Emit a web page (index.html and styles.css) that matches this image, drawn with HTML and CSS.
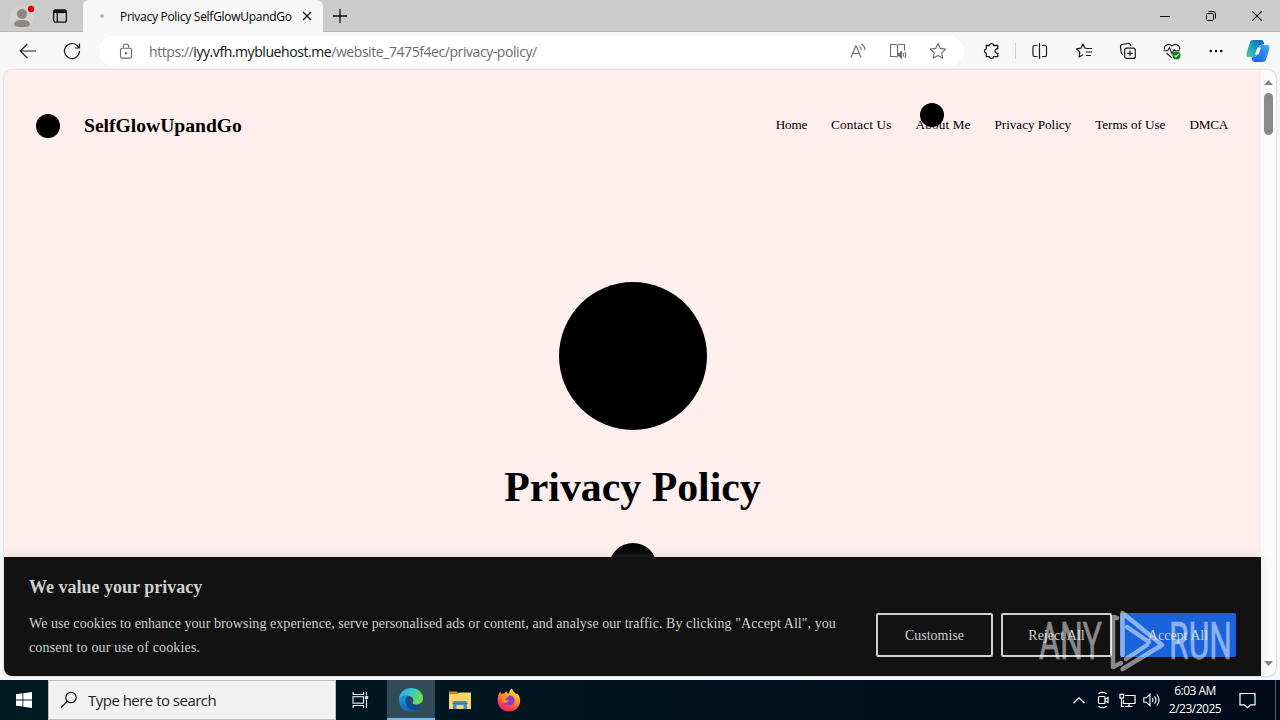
FILE: index.html
```html
<!DOCTYPE html>
<html lang="en">
<head>
    <meta charset="UTF-8">
    <meta name="viewport" content="width=device-width, initial-scale=1.0">
    <title>Privacy Policy SelfGlowUpandGo</title>
    <link rel="stylesheet" href="styles.css">
</head>
<body>
<div class="desktop">

    <!-- Tab strip -->
    <div class="tabstrip">
        <div class="profile">
            <svg width="28" height="28" viewBox="0 0 28 28"><circle cx="14" cy="14" r="12" fill="#d3d1d0"/><circle cx="14" cy="11" r="5" fill="#8b8785"/><path d="M6 22c0-4 3-5 8-5s8 1 8 5c-2 3-14 3-16 0z" fill="#8b8785"/><circle cx="23" cy="6" r="3.2" fill="#e3000f"/></svg>
        </div>
        <div class="workspaces">
            <svg width="16" height="16" viewBox="0 0 16 16" fill="none" stroke="#111" stroke-width="1.3"><rect x="1.6" y="1.8" width="12.8" height="12.4" rx="2.2"/><path d="M2 3.6h12" stroke-width="3"/><path d="M5.3 4v10"/></svg>
        </div>
        <div class="tab">
            <span class="tab-spinner"></span>
            <span class="tab-title">Privacy Policy SelfGlowUpandGo</span>
            <svg width="10" height="10" viewBox="0 0 10 10" stroke="#111" stroke-width="1.3"><path d="M1 1l8 8M9 1L1 9"/></svg>
        </div>
        <div class="new-tab">
            <svg width="14" height="14" viewBox="0 0 14 14" stroke="#111" stroke-width="1.3"><path d="M7 0v14M0 7h14"/></svg>
        </div>
        <div class="window-buttons">
            <span><svg width="10" height="10" viewBox="0 0 10 10" stroke="#111"><path d="M0 5.5h10"/></svg></span>
            <span><svg width="10" height="10" viewBox="0 0 10 10" fill="none" stroke="#111"><rect x=".5" y="2.5" width="7" height="7" rx="1.2"/><path d="M2.5 .5H7a2.5 2.5 0 0 1 2.5 2.5v4.5"/></svg></span>
            <span><svg width="10" height="10" viewBox="0 0 10 10" stroke="#111" stroke-width="1.1"><path d="M0 0l10 10M10 0L0 10"/></svg></span>
        </div>
    </div>

    <!-- Toolbar -->
    <div class="toolbar">
        <span class="tool"><svg width="18" height="16" viewBox="0 0 18 16" fill="none" stroke="#222" stroke-width="1.2"><path d="M17 8H1.5M8.3 1L1.3 8l7 7"/></svg></span>
        <span class="tool"><svg width="18" height="18" viewBox="0 0 18 18" fill="none" stroke="#222" stroke-width="1.2"><path d="M16.5 9A7.5 7.5 0 1 1 14.4 3.8L16.5 6M16.5 1.5V6H12"/></svg></span>
        <div class="address">
            <svg class="lock" width="14" height="16" viewBox="0 0 14 16" fill="none" stroke="#6b6b6b" stroke-width="1.1"><rect x="1.5" y="5.3" width="11" height="9.8" rx="1.5"/><path d="M4.3 5.3V3.7a2.7 2.7 0 0 1 5.4 0v1.6"/><circle cx="7" cy="10.3" r=".7" fill="#6b6b6b"/></svg>
            <span class="url">https://<b>iyy.vfh.mybluehost.me</b>/website_7475f4ec/privacy-policy/</span>
            <span class="address-icon"><svg width="18" height="16" viewBox="0 0 18 16" fill="none" stroke="#6b6b6b" stroke-width="1.1"><path d="M2 14.5L6.7 3h.6L12 14.5M3.6 10.5h6.8M10.3 3.6c1.4.9 2 2 2.1 3.7M12.3 1c2.5 1.3 3.7 3.4 3.8 6.3"/></svg></span>
            <span class="address-icon"><svg width="18" height="16" viewBox="0 0 18 16" fill="none" stroke="#6b6b6b" stroke-width="1.1"><path d="M8.5 2.7C8.2 1.8 7.5 1.5 6.5 1.5H1.5v12h5c1 0 1.7.3 2 1M8.5 2.7C8.8 1.8 9.5 1.5 10.5 1.5h5v6M8.5 2.7v10"/><path d="M9 10.5h1.5l2-2v6.5l-2-2H9z" fill="#6b6b6b"/><path d="M14 10c.8 1 .8 2.5 0 3.5M15.7 8.7c1.4 2 1.4 4.2 0 6.1"/></svg></span>
            <span class="address-icon"><svg width="18" height="18" viewBox="0 0 18 18" fill="none" stroke="#6b6b6b" stroke-width="1.1" stroke-linejoin="round"><path d="M9 1.5l2.3 4.9 5.3.7-3.9 3.7 1 5.4L9 13.6l-4.7 2.6 1-5.4L1.4 7.1l5.3-.7z"/></svg></span>
        </div>
        <span class="tool"><svg width="18" height="18" viewBox="0 0 18 18" fill="none" stroke="#1b1b1b" stroke-width="1.3" stroke-linejoin="round"><path d="M4.3 3.5h3a2.3 2.3 0 0 1 4.5 0h4v3.3a2.3 2.3 0 1 0 0 4.5v3.3h-4a2.3 2.3 0 0 1-4.5 0h-3v-3.3a2.3 2.3 0 0 1 0-4.5z"/></svg></span>
        <span class="tool-divider"></span>
        <span class="tool"><svg width="18" height="16" viewBox="0 0 18 16" fill="none" stroke="#1b1b1b" stroke-width="1.2"><path d="M6.5 2.5h-3A1.5 1.5 0 0 0 2 4v8a1.5 1.5 0 0 0 1.5 1.5h3M11 2.5h3A1.5 1.5 0 0 1 15.5 4v8a1.5 1.5 0 0 1-1.5 1.5h-3M8.5 0v16"/></svg></span>
        <span class="tool"><svg width="18" height="18" viewBox="0 0 18 18" fill="none" stroke="#1b1b1b" stroke-width="1.2" stroke-linejoin="round"><path d="M11 6.2L9.8 6 8 2 6 6.2l-4.5.6 3.3 3.2-.8 5 4-2.3M11 6.5h6M11 10h6M11 13.5h5"/></svg></span>
        <span class="tool"><svg width="18" height="18" viewBox="0 0 18 18" fill="none" stroke="#1b1b1b" stroke-width="1.2"><rect x="5.7" y="6.2" width="10.6" height="10.2" rx="2"/><path d="M11 8.5v5.6M8.2 11.3h5.6M3.8 12.8C2.5 12 2.2 11 2 9.5L1.5 4.8C1.4 3.5 2 2.7 3.3 2.5L9 1.5c1.4-.2 2.4.4 2.8 2.5"/></svg></span>
        <span class="tool"><svg width="20" height="18" viewBox="0 0 20 18" fill="none" stroke="#1b1b1b" stroke-width="1.1"><path d="M2.5 7.5C1.5 3.5 6.5.5 10 4c3.5-3.5 8.5-.5 7.5 3.5M1.5 8.7h4l2-3 2.5 6 2-4 1 1h5M4.5 11l5.5 5"/><circle cx="14.5" cy="13.5" r="4" fill="#15801b" stroke="none"/><path d="M12.7 13.5l1.3 1.3 2.5-2.6" stroke="#fff"/></svg></span>
        <span class="tool"><svg width="14" height="4" viewBox="0 0 14 4"><circle cx="1.7" cy="2" r="1.2"/><circle cx="7" cy="2" r="1.2"/><circle cx="12.3" cy="2" r="1.2"/></svg></span>
        <span class="tool copilot"><svg width="24" height="24" viewBox="0 0 24 24">
            <defs>
                <linearGradient id="cpA" x1="0" y1="1" x2="1" y2="0"><stop offset="0" stop-color="#59c6a0"/><stop offset=".5" stop-color="#169fc1"/><stop offset="1" stop-color="#1458b5"/></linearGradient>
                <linearGradient id="cpB" x1="0" y1="1" x2="1" y2="0"><stop offset="0" stop-color="#1668d8"/><stop offset=".6" stop-color="#2a84ec"/><stop offset="1" stop-color="#49b5ee"/></linearGradient>
            </defs>
            <path d="M7 1h8c2 0 2.5 1 3.2 4l-4.5 1.5-3.2 9C9.8 17.5 9 18 7.5 18H3C.5 18 0 16 .7 13.5L4 3.5C4.6 1.7 5.500 1 7 1z" fill="url(#cpA)"/>
            <path d="M17 23H9c-2 0-2.8-1-3.5-4.5l4.5-1 3.3-9.3C14 6.5 15 6 16.5 6H21c2.5 0 3 2 2.3 4.5L20 20.5c-.6 1.8-1.5 2.5-3 2.5z" fill="url(#cpB)"/>
            <path d="M11.5 8.5h3.5l-2.5 7H9z" fill="#f7f7f7"/>
        </svg></span>
    </div>

    <!-- Web page -->
    <div class="viewport">
        <div class="page">
            <div class="site-header">
                <span class="site-dot"></span>
                <span class="site-name">SelfGlowUpandGo</span>
                <div class="site-nav">
                    <a class="narrow">Home</a>
                    <a class="wide">Contact Us</a>
                    <a class="wide has-dot">About Me</a>
                    <a>Privacy Policy</a>
                    <a>Terms of Use</a>
                    <a class="narrow">DMCA</a>
                </div>
            </div>
            <div class="hero">
                <span class="hero-circle"></span>
                <h1>Privacy Policy</h1>
                <span class="hero-dot"></span>
            </div>

            <!-- Cookie banner -->
            <div class="cookie-bar">
                <p class="cookie-title">We value your privacy</p>
                <div class="cookie-body">
                    <p class="cookie-text">We use cookies to enhance your browsing experience, serve personalised ads or content, and analyse our traffic. By clicking "Accept All", you<br><span>consent to our use of cookies.</span></p>
                    <button class="btn btn-customise">Customise</button>
                    <button class="btn btn-reject">Reject All</button>
                    <button class="btn btn-accept">Accept All</button>
                </div>
            </div>
        </div>
        <div class="scrollbar">
            <svg width="9" height="5" viewBox="0 0 9 5"><path d="M0 5L4.5 0 9 5z" fill="#858585"/></svg>
            <span class="scroll-thumb"></span>
            <svg width="9" height="5" viewBox="0 0 9 5"><path d="M0 0h9L4.5 5z" fill="#858585"/></svg>
        </div>
    </div>

    <!-- Taskbar -->
    <div class="taskbar">
        <div class="start">
            <svg width="16" height="16" viewBox="0 0 16 16" fill="#fff"><path d="M0 2.2l6.5-.9v6.2H0zM7.3 1.2L16 0v7.5H7.3zM0 8.4h6.5v6.2L0 13.7zM7.3 8.4H16V16l-8.7-1.2z"/></svg>
        </div>
        <div class="search">
            <svg width="18" height="18" viewBox="0 0 18 18" fill="none" stroke="#222" stroke-width="1.3"><circle cx="11" cy="6.5" r="5.2"/><path d="M7.3 10.3L1 16.7"/></svg>
            <span>Type here to search</span>
        </div>
        <div class="task task-view"><svg width="17" height="16" viewBox="0 0 17 16" fill="none" stroke="#e8eef0" stroke-width="1.1"><path d="M1 0v2.5h10.5V0M1 16v-2.5h10.5V16M14.5 0v3.5M14.5 7.5V16"/><rect x="1" y="4.7" width="10.5" height="6.5"/><rect x="13.6" y="4.6" width="2" height="2" fill="#fff"/></svg></div>
        <div class="task task-active">
            <svg width="26" height="26" viewBox="0 0 26 26">
                <defs>
                    <linearGradient id="edA" x1="0" y1="0" x2="1" y2=".4"><stop offset="0" stop-color="#29a9e0"/><stop offset=".55" stop-color="#36c9c6"/><stop offset="1" stop-color="#72dc51"/></linearGradient>
                    <linearGradient id="edB" x1="0" y1="0" x2=".5" y2="1"><stop offset="0" stop-color="#1c9be0"/><stop offset="1" stop-color="#1163b8"/></linearGradient>
                </defs>
                <path d="M1 12C1.5 5.5 6.5 1 13 1c7 0 12 4.7 12 10.3 0 4-3 6.2-6.5 6.2-2.5 0-4.3-.9-3.8-2 1.5-2 .5-5.5-3-6.5C7.5 8 3 9 1 12z" fill="url(#edA)"/>
                <path d="M1 12.5C2.5 9 7 7.7 10.5 8.5c-2.3 1-3.5 3.5-3 6.5.7 4.5 5 8.5 11 7-1.5 2-4 3-6.5 3C5.5 24.5.5 19.5 1 12.5z" fill="url(#edB)"/>
                <path d="M8.5 12c-2 5.5 1.5 11 8 10.7 3-.2 5.5-2 7-4.2.3-.6-.2-.9-.7-.6-3 1.7-8 1.2-9.8-1.6C12 14.5 12.5 13 13.3 12.5c-1.3-2.3-3.8-2.2-4.8-.5z" fill="#0c4a9a"/>
            </svg>
        </div>
        <div class="task">
            <svg width="22" height="19" viewBox="0 0 22 19"><path d="M0 .5h8l1.5 1.8H0z" fill="#d98f1a"/><path d="M0 2.5h9l1.5-1H22V18H0z" fill="#f8d768"/><path d="M4 18v-6.5c0-1 .5-1.5 1.5-1.5h11c1 0 1.5.5 1.5 1.5V18h-3.5v-4h-7v4z" fill="#3e91cc"/><path d="M3.5 12.5h15" stroke="#2d7db8"/></svg>
        </div>
        <div class="task">
            <svg width="24" height="24" viewBox="0 0 24 24">
                <defs><linearGradient id="ff" x1=".8" y1="0" x2=".3" y2="1"><stop offset="0" stop-color="#fff04a"/><stop offset=".4" stop-color="#ff9a1f"/><stop offset=".75" stop-color="#ff4047"/><stop offset="1" stop-color="#e81e78"/></linearGradient></defs>
                <path d="M3.5 3.5c0 1 .5 2 1.2 2.5 1-.6 2-.8 3-.7C8 4.3 8.7 3.5 9.5 3c0 1.5 1 2.3 2.5 2.5C12.2 3 13.3 1.3 15 .5c.5 2.5 2.5 3.5 4.3 5.5.7.3.8-.4.8-.8 2.3 2.5 3.2 5.3 3 8.3C22.7 19.3 18 23.5 12 23.5S1 19 .7 13C.5 9 1.5 5.5 3.5 3.5z" fill="url(#ff)"/>
                <path d="M12 7.5c3.5-.5 5.8 2.2 5.6 5-.2 3-2.5 5-5.4 5-3 0-5.2-1.8-5.6-4.5 1.7 1.3 4.2 1 5.5-.8-1.5-.3-3.3-.4-3.7-1.2.3-1.2 1.5-1.3 2.6-2z" fill="#8b3ad0"/>
                <path d="M5 9c1.5-1 3.5-.7 5 .5-1 .8-2.2 1-2.5 2.3.3 1 2 .9 4.2 1-1.5 2.5-4.5 2.5-6.5.7z" fill="#ff9629"/>
            </svg>
        </div>
        <div class="tray">
            <span><svg width="12" height="7" viewBox="0 0 12 7" fill="none" stroke="#fff" stroke-width="1.3"><path d="M.5 6.3L6 .9l5.5 5.4"/></svg></span>
            <span><svg width="14" height="18" viewBox="0 0 14 18" fill="none" stroke="#fff" stroke-width="1.2"><rect x="2.5" y="5.5" width="6.5" height="7" rx="1"/><path d="M9 8.3L12 6.5v5L9 9.7M2.5 2.7c2-1.9 6-1.9 8 0M2.5 15.3c2 1.9 6 1.9 8 0"/></svg></span>
            <span><svg width="17" height="15" viewBox="0 0 17 15" fill="none" stroke="#fff" stroke-width="1.2"><path d="M6 2.5h10v8H4.5V7M10 10.5v3M6.5 13.5h7M2.5 5.5v8H5"/><rect x="1" y="1.3" width="3.5" height="3.8"/></svg></span>
            <span><svg width="17" height="14" viewBox="0 0 17 14" fill="none" stroke="#fff" stroke-width="1.1"><path d="M.8 4.8h2.5L7 1.3v11.4L3.3 9.2H.8zM9.3 5c.8 1.2.8 2.8 0 4M11.5 3.3c1.9 2.3 1.9 5.1 0 7.4M13.7 1.5c3 3.5 3 7.5 0 11"/></svg></span>
            <div class="clock"><span>6:03 AM</span><span>2/23/2025</span></div>
            <span class="notice"><svg width="17" height="17" viewBox="0 0 17 17" fill="none" stroke="#fff" stroke-width="1.2"><path d="M1 1.5h15v11.3h-4.5L8.5 15.7l-3-2.9H1z"/></svg></span>
        </div>
    </div>

    <!-- Watermark laid over the page -->
    <svg class="watermark" width="200" height="68" viewBox="0 0 200 68">
        <g class="watermark-text">
            <text x="1" y="52" textLength="63" lengthAdjust="spacingAndGlyphs">ANY</text>
            <text x="131" y="52" textLength="63" lengthAdjust="spacingAndGlyphs">RUN</text>
        </g>
        <g fill="none" stroke="#fff" stroke-width="4.5" stroke-linejoin="round" stroke-linecap="round">
            <path d="M79 11l-4-1v50l8-4"/>
            <path d="M84.500 48V6L124 38 84.500 62M89 20l22 15M88 52l21-14"/>
        </g>
    </svg>
</div>
</body>
</html>
```
FILE: styles.css
```css
body {
    margin: 0;
    font-family: "Open Sans", "Noto Sans", sans-serif;
    background-color: #f7f7f7;
}

.desktop {
    position: relative;
    display: flex;
    flex-direction: column;
    width: 1280px;
    height: 720px;
    overflow: hidden;
}

svg {
    display: block;
    flex: none;
}

/* Tab strip */
.tabstrip {
    display: flex;
    height: 32px;
    background-color: #cbcbcb;
    box-shadow: inset 0 -1px 0 #bababa;
}

.profile {
    display: flex;
    width: 44px;
    justify-content: center;
    align-items: center;
    padding-top: 2px;
    box-sizing: border-box;
}

.workspaces {
    display: flex;
    align-items: center;
    justify-content: center;
    width: 32px;
}

.tab {
    display: flex;
    align-items: center;
    box-sizing: border-box;
    width: 240px;
    margin-left: 7px;
    padding: 0 11px 0 17px;
    background-color: #f7f7f7;
    border-radius: 6px 6px 0 0;
}

.tab-spinner {
    width: 4px;
    height: 4px;
    border-radius: 50%;
    background-color: #bbb;
}

.tab-title {
    flex: 1;
    margin-left: 16px;
    font-size: 12px;
    letter-spacing: -0.28px;
    white-space: nowrap;
}

.new-tab {
    display: flex;
    align-items: center;
    margin-left: 10px;
}

.window-buttons {
    display: flex;
    margin-left: auto;
}

.window-buttons span {
    display: flex;
    width: 46px;
    align-items: center;
    justify-content: center;
}

/* Toolbar */
.toolbar {
    display: flex;
    align-items: center;
    height: 38px;
    padding: 0 2px 0 6px;
    background-color: #f7f7f7;
}

.tool {
    display: flex;
    width: 44px;
    align-items: center;
    justify-content: center;
}

.copilot {
    width: 40px;
}

.tool-divider {
    width: 1px;
    height: 16px;
    margin: 0 2px;
    background-color: #d0d0d0;
}

.address {
    display: flex;
    flex: 1;
    align-items: center;
    height: 30px;
    margin: 0 5px;
    padding: 0 6px 0 20px;
    background-color: #fff;
    border-radius: 15px;
}

.url {
    flex: 1;
    margin-left: 16px;
    font-size: 14px;
    letter-spacing: -0.43px;
    color: #6b6b6b;
    white-space: nowrap;
}

.url b {
    font-weight: normal;
    color: #111;
}

.address-icon {
    display: flex;
    width: 40px;
    justify-content: center;
}

/* Web page */
.viewport {
    display: flex;
    height: 606px;
    margin: 0 4px 4px;
    border-radius: 8px;
    overflow: hidden;
    background-color: #fcfcfc;
    box-shadow: 0 0 2px rgba(0, 0, 0, 0.3);
}

.page {
    display: flex;
    flex-direction: column;
    width: 1257px;
    background-color: #ffeeee;
    font-family: "Liberation Serif", serif;
    color: #000;
}

.site-header {
    display: flex;
    align-items: center;
    height: 24px;
    padding: 44px 33px 0 32px;
}

.site-dot {
    width: 24px;
    height: 24px;
    border-radius: 50%;
    background-color: #000;
}

.site-name {
    margin-left: 24px;
    font-size: 19.6px;
    font-weight: bold;
}

.site-nav {
    display: flex;
    gap: 24px;
    margin-left: auto;
    padding-bottom: 3px;
    font-size: 13.2px;
    letter-spacing: -0.05px;
}

.site-nav .wide {
    letter-spacing: 0.15px;
}

.site-nav .narrow {
    letter-spacing: -0.25px;
}

.has-dot {
    position: relative;
}

.has-dot::before {
    content: "";
    position: absolute;
    left: 4px;
    top: -14px;
    width: 24px;
    height: 24px;
    border-radius: 50%;
    background-color: #000;
}

.hero {
    display: flex;
    flex: 1;
    min-height: 0;
    flex-direction: column;
    align-items: center;
    overflow: hidden;
    padding-top: 144px;
}

.hero-circle {
    flex: none;
    width: 148px;
    height: 148px;
    border-radius: 50%;
    background-color: #000;
}

.hero h1 {
    margin: 33px 0 32px;
    font-size: 41.8px;
    line-height: 48px;
}

.hero-dot {
    flex: none;
    width: 48px;
    height: 48px;
    border-radius: 50%;
    background-color: #000;
}

.cookie-bar {
    position: relative;
    box-sizing: border-box;
    height: 119px;
    padding: 19px 25px 0;
    background-color: #121212;
    color: #d0d0d0;
    box-shadow: 0 -1px 10px rgba(172, 171, 171, 0.3);
}

.cookie-title {
    margin: 0;
    font-size: 18px;
    font-weight: bold;
    line-height: 22px;
}

.cookie-body {
    display: flex;
    align-items: flex-start;
    margin-top: 14px;
}

.cookie-text {
    flex: 1;
    margin: 0;
    font-size: 14px;
    line-height: 24px;
    letter-spacing: 0.057px;
    white-space: nowrap;
}

.cookie-text span {
    letter-spacing: 0.16px;
}

.btn {
    height: 44px;
    margin: 1px 0 0 8px;
    padding: 1px 0 0;
    background: transparent;
    border: 2px solid #d0d0d0;
    border-radius: 2px;
    color: #d0d0d0;
    font-family: inherit;
    font-size: 14px;
}

.btn-customise {
    width: 117px;
}

.btn-reject {
    width: 111px;
}

.btn-accept {
    width: 116px;
    background-color: #1863dc;
    border-color: #1863dc;
}

.scrollbar {
    display: flex;
    flex-direction: column;
    align-items: center;
    width: 15px;
    padding: 10px 0;
    box-sizing: border-box;
}

.scroll-thumb {
    width: 9px;
    height: 42px;
    margin: 8px 0 auto;
    border-radius: 5px;
    background-color: #8a8a8a;
}

/* Taskbar */
.taskbar {
    display: flex;
    height: 40px;
    background: linear-gradient(90deg, #001a22, #001420 50%, #020a1c);
    color: #fff;
}

.start {
    display: flex;
    width: 48px;
    align-items: center;
    justify-content: center;
}

.search {
    display: flex;
    align-items: center;
    box-sizing: border-box;
    width: 288px;
    padding-left: 11px;
    background-color: #f2f2f2;
    border: 1px solid #bdbdbd;
    color: #222;
    font-size: 15px;
}

.search span {
    margin-left: 10px;
    letter-spacing: -0.52px;
}

.task {
    display: flex;
    width: 49px;
    align-items: center;
    justify-content: center;
}

.task-view {
    margin-right: 2px;
}

.task-active {
    width: 48px;
    background-color: #324c57;
    box-shadow: inset 0 -2px 0 #76b9ed;
}

.tray {
    display: flex;
    align-items: center;
    margin-left: auto;
    padding-right: 4px;
}

.tray > span {
    display: flex;
    width: 24px;
    justify-content: center;
}

.clock {
    display: flex;
    flex-direction: column;
    align-items: center;
    width: 64px;
    font-size: 12px;
    line-height: 18px;
    letter-spacing: -0.5px;
}

.tray .notice {
    width: 56px;
    height: 40px;
    margin-left: -8px;
    align-items: center;
    border-right: 1px solid #56606c;
}

.watermark {
    position: absolute;
    left: 1038px;
    top: 607px;
    opacity: 0.5;
}

.watermark-text {
    fill: #fff;
    stroke: #fff;
    stroke-width: 0.5px;
    font-family: Roboto, sans-serif;
    font-size: 52px;
}
```
